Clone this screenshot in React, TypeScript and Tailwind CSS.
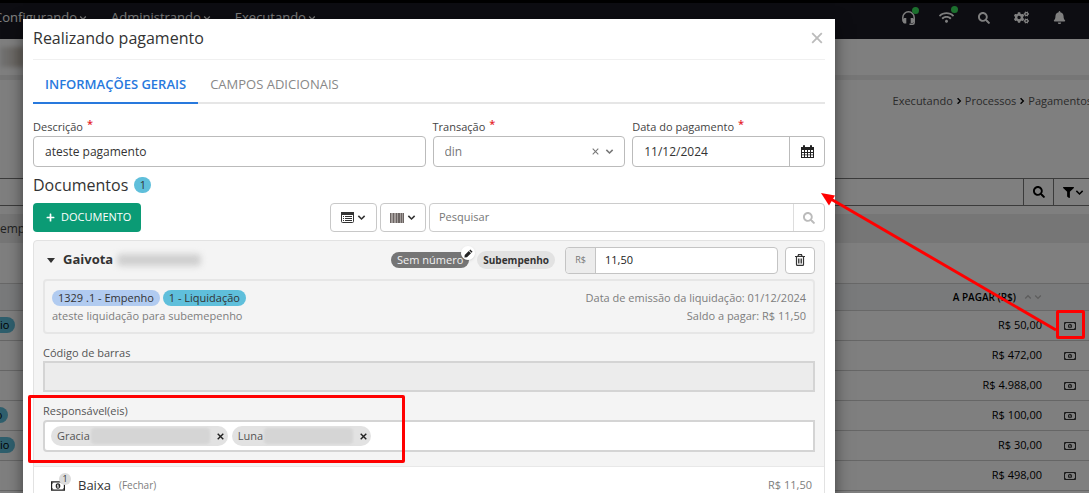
import React from "react";
import { FaBell, FaCogs, FaFilter, FaPlus, FaSearch, FaWifi } from "react-icons/fa";

function Chevron({ up = false, className = "" }: { up?: boolean; className?: string }) {
  return (
    <svg viewBox="0 0 10 10" className={className} fill="none" stroke="currentColor" strokeWidth="1.7" aria-hidden="true">
      <path d={up ? "M1.5 7 5 3.5 8.5 7" : "M1.5 3.2 5 6.7l3.5-3.5"} />
    </svg>
  );
}

function Cross({ className = "", stroke = 1.5 }: { className?: string; stroke?: number }) {
  return (
    <svg viewBox="0 0 10 10" className={className} fill="none" stroke="currentColor" strokeWidth={stroke} aria-hidden="true">
      <path d="m1 1 8 8M9 1 1 9" />
    </svg>
  );
}

function Headphones({ className = "" }: { className?: string }) {
  return (
    <svg viewBox="0 0 13 14" className={className} aria-hidden="true">
      <path fill="none" stroke="currentColor" strokeWidth="1.5" d="M1.200 10.500Q.8 8.500.8 6.500a5.700 5.700 0 0 1 11.400 0v5.200q0 1.500-1.700 1.500H7.500" />
      <path fill="currentColor" d="M2.300 7h2v5.500h-2Q1 12.500.8 10.500V8.500ZM10.700 7h-2v5h2l1.700-1.500v-2Z" />
    </svg>
  );
}

function Money({ className = "" }: { className?: string }) {
  return (
    <svg viewBox="0 0 12 8" className={className} aria-hidden="true">
      <path fill="none" stroke="currentColor" d="M.5.5h11v7H.5Z" />
      <path fill="currentColor" d="M1 1h1.200L1 2.200ZM11 1H9.800L11 2.200ZM1 7h1.200L1 5.800ZM11 7H9.800L11 5.800Z" />
      <path fill="currentColor" fillRule="evenodd" d="M6 1.700c1.300 0 2 1 2 2.300s-.7 2.300-2 2.300S4 5.300 4 4s.7-2.300 2-2.300ZM5.700 2.700l-.7.600.3.400.3-.2v1.200H5v.6h2v-.6h-.6v-2Z" />
    </svg>
  );
}

function Calendar({ className = "" }: { className?: string }) {
  return (
    <svg viewBox="0 0 13 13" className={className} aria-hidden="true">
      <path
        fill="currentColor"
        fillRule="evenodd"
        d="M0 2h2V.8Q2 0 3 0t1 .8V2h5V.8Q9 0 10 0t1 .8V2h2v11H0ZM1 5v2h2V5Zm3 0v2h2V5Zm3 0v2h2V5Zm3 0v2h2V5ZM1 8v1.500h2V8Zm3 0v1.500h2V8Zm3 0v1.500h2V8Zm3 0v1.500h2V8ZM1 10.300V12h2v-1.700Zm3 0V12h2v-1.700Zm3 0V12h2v-1.700Zm3 0V12h2v-1.700Z"
      />
    </svg>
  );
}

function ListBox({ className = "" }: { className?: string }) {
  return (
    <svg viewBox="0 0 13 11" className={className} aria-hidden="true">
      <rect x=".5" y=".5" width="12" height="10" rx="1" fill="none" stroke="currentColor" />
      <path fill="currentColor" d="M0 0h13v3H0ZM2 4h1v1H2Zm2 0h7v1H4ZM2 6h1v1H2Zm2 0h7v1H4ZM2 8h1v1H2Zm2 0h7v1H4Z" />
    </svg>
  );
}

function Barcode({ className = "" }: { className?: string }) {
  return (
    <svg viewBox="0 0 14 10" className={className} aria-hidden="true">
      <path fill="#a39d9b" d="M0 0h14v10H0Z" />
      <path fill="#6b6462" d="M0 0h1v10H0ZM3 0h1v10H3ZM6 0h1v10H6ZM8 0h2v10H8ZM11 0h1v10h-1ZM13 0h1v10h-1Z" />
    </svg>
  );
}

function Trash({ className = "" }: { className?: string }) {
  return (
    <svg viewBox="0 0 10 12" className={className} fill="none" stroke="currentColor" aria-hidden="true">
      <path strokeWidth="1.200" d="M0 2.500h10M3 2.300 3.500.7h3L7 2.300M1.500 2.500v8q0 .9.900.9h5.200q.9 0 .9-.9v-8" />
      <path strokeWidth=".9" d="M3.500 4.500v5M5 4.500v5M6.500 4.500v5" />
    </svg>
  );
}

const rows = [
  { value: "R$ 50,00", tag: "io", tagShift: "" },
  { value: "R$ 472,00" },
  { value: "R$ 4.988,00" },
  { value: "R$ 100,00", tag: "io", tagShift: "-ml-[7px]" },
  { value: "R$ 30,00", tag: "io", tagShift: "" },
  { value: "R$ 498,00" },
];

function NavLink({ children }: { children: string }) {
  return (
    <a href="#" className="flex items-center gap-0.5 text-[13px] text-white">
      {children}
      <Chevron className="size-2" />
    </a>
  );
}

function Page() {
  return (
    <div className="min-h-full bg-white">
      <header className="flex h-[39px] items-center justify-between border-t-[3px] border-black bg-[#1a1a24] pb-[7px] text-white">
        <nav className="-ml-1.5 flex items-center gap-6">
          <NavLink>Configurando</NavLink>
          <NavLink>Administrando</NavLink>
          <NavLink>Executando</NavLink>
        </nav>
        <div className="-mr-[13px] flex shrink-0 items-center gap-6">
          <button aria-label="Suporte" className="relative">
            <Headphones className="h-[14px] w-[13px]" />
            <span className="absolute -top-1 -right-1 size-[7px] rounded-full bg-[#38e05c]" />
          </button>
          <button aria-label="Conexão" className="relative">
            <FaWifi className="size-[15px]" />
            <span className="absolute -top-1 -right-1 size-[7px] rounded-full bg-[#38e05c]" />
          </button>
          <button aria-label="Buscar"><FaSearch className="size-3" /></button>
          <button aria-label="Configurações"><FaCogs className="size-[15px]" /></button>
          <button aria-label="Notificações"><FaBell className="size-[13px]" /></button>
          <span className="size-3 rounded-full bg-[#6fa8ee]" />
        </div>
      </header>

      <div className="flex h-[41px] items-center border-b-[5px] border-[#ececec]">
        <span className="h-5 w-6 bg-linear-to-r from-[#e6e6e6] to-[#c9c0b4] blur-[2px]" />
      </div>

      <nav className="-mr-[3px] flex h-[42px] items-center justify-end gap-0.5 text-[11px] text-[#555]">
        <a href="#">Executando</a>
        <Chevron className="size-2 -rotate-90 text-black" />
        <a href="#">Processos</a>
        <Chevron className="size-2 -rotate-90 text-black" />
        <a href="#">Pagamentos</a>
      </nav>

      <div className="mt-14 flex h-7 border-y border-[#777]">
        <input aria-label="Filtro" className="min-w-0 grow border-r border-[#777]" />
        <button aria-label="Pesquisar" className="flex w-[30px] items-center justify-center border-r border-[#777]">
          <FaSearch className="size-3" />
        </button>
        <button aria-label="Filtrar" className="flex w-[35px] items-center justify-center gap-px pl-1">
          <FaFilter className="size-[11px]" />
          <Chevron className="size-[9px]" />
        </button>
      </div>

      <div className="mt-2 flex h-[29px] items-center bg-[#ececec] text-xs text-[#444]">emp</div>

      <table className="mt-10 w-full border-collapse text-[11px] text-black">
        <thead>
          <tr className="h-[27px] border-y border-[#d0d0d0] bg-[#f2f4f6]">
            <th />
            <th className="text-right text-[10px] font-semibold">
              <span className="inline-flex items-center justify-end gap-0.5">
                <span className="mr-1.5">A PAGAR (R$)</span>
                <Chevron up className="size-2 text-[#bbb]" />
                <Chevron className="size-2 text-[#bbb]" />
              </span>
            </th>
            <th className="w-[47px]" />
          </tr>
        </thead>
        <tbody>
          {rows.map((row) => (
            <tr key={row.value} className="h-[30px] border-b border-[#ccc]">
              <td>
                {row.tag && (
                  <span className={`inline-block rounded-r-full bg-[#5fbfdb] pr-1.5 leading-4 ${row.tagShift}`}>{row.tag}</span>
                )}
              </td>
              <td className="text-right">{row.value}</td>
              <td className="w-[47px]">
                <button aria-label="Pagar" className="ml-[22px] block"><Money className="h-2 w-3 text-[#333]" /></button>
              </td>
            </tr>
          ))}
        </tbody>
      </table>
    </div>
  );
}

function FieldLabel({ id, children }: { id: string; children: string }) {
  return (
    <label htmlFor={id} className="flex h-[18px] items-center gap-1 text-[11px] font-medium text-[#444]">
      {children}
      <span className="-mt-1.5 font-semibold text-[#e5252a]">*</span>
    </label>
  );
}

function Person({ name, blurClass }: { name: string; blurClass: string }) {
  return (
    <span className="flex h-5 items-center rounded-full bg-[#e2e2e2] pr-1 pl-1.5 text-[#555]">
      {name}
      <span className={`mx-px h-4 rounded-sm bg-[#d5d5d5] blur-[1px] ${blurClass}`} />
      <button aria-label={`Remover ${name}`} className="ml-1.5 text-[#222]"><Cross className="size-[7px]" stroke={2} /></button>
    </span>
  );
}

function DocumentCard() {
  return (
    <section className="mt-2 rounded-t border border-[#e2e2e2] bg-[#f4f4f4] text-[11px]">
      <div className="px-[9px] pt-[5px]">
        <div className="flex h-7 items-center">
          <button className="flex items-center gap-2 pl-1 text-[13px] font-bold text-[#333]">
            <svg viewBox="0 0 8 5" className="h-[5px] w-2" aria-hidden="true"><path fill="currentColor" d="M0 0h8L4 5Z" /></svg>
            Gaivota
          </button>
          <span className="ml-1 h-3 w-[84px] rounded bg-[#cfcfcf] blur-[3px]" />
          <span className="relative ml-auto rounded-full bg-[#757575] px-1.5 leading-4 text-[#f2f2f2]">
            Sem número
            <button aria-label="Editar número" className="absolute -top-1.5 -right-1.5 flex size-[14px] items-center justify-center rounded-full bg-white text-[#222] shadow">
              <svg viewBox="0 0 10 10" className="size-[9px]" aria-hidden="true">
                <path fill="currentColor" d="M7 .5 9.500 3 8.400 4.100 5.900 1.600ZM5.300 2.200l2.500 2.500-4.500 4.500L.5 9.500l.3-2.800Z" />
              </svg>
            </button>
          </span>
          <span className="mr-2.5 ml-2 rounded-full bg-[#e2e2e2] px-1.5 text-[10px] leading-[18px] font-bold text-[#333]">Subempenho</span>
          <div className="flex h-[27px] w-[213px] rounded border border-[#c4c4c4] bg-white">
            <span className="flex w-[30px] items-center justify-center rounded-l border-r border-[#c4c4c4] bg-[#ececec] text-[9px] text-[#777]">R$</span>
            <input aria-label="Valor" defaultValue="11,50" className="w-0 grow px-[9px] text-[#222] outline-none" />
          </div>
          <button aria-label="Excluir" className="ml-[7px] flex h-[27px] w-[30px] items-center justify-center rounded border border-[#c4c4c4] bg-white text-[#333]">
            <Trash className="h-3 w-2.5" />
          </button>
        </div>

        <div className="mt-[5px] flex h-[55px] justify-between rounded border-2 border-[#e6e6e6] px-[7px] pt-[9px] text-[#7d7d7d]">
          <div>
            <div className="flex gap-[3px] text-[#333]">
              <span className="rounded-full bg-[#b1cbf0] px-1.5 leading-4">1329 .1 - Empenho</span>
              <span className="rounded-full bg-[#5fbfdb] px-1.5 leading-4">1 - Liquidação</span>
            </div>
            <p className="mt-0.5 leading-4">ateste liquidação para subemepenho</p>
          </div>
          <div className="text-right">
            <p className="leading-4">Data de emissão da liquidação: 01/12/2024</p>
            <p className="mt-0.5 leading-4">Saldo a pagar: R$ 11,50</p>
          </div>
        </div>

        <label htmlFor="barcode" className="mt-2.5 block leading-[17px] font-medium text-[#555]">Código de barras</label>
        <input id="barcode" readOnly className="block h-[31px] w-full border-2 border-[#d4d4d4] bg-[#ececec] px-2" />

        <label htmlFor="people" className="mt-2.5 block leading-[18px] font-medium text-[#555]">Responsável(eis)</label>
        <div className="flex h-8 items-center gap-1 rounded-l-sm border-2 border-[#d4d4d4] bg-white px-1.5">
          <Person name="Gracia" blurClass="w-[119px]" />
          <Person name="Luna" blurClass="w-[89px]" />
          <input id="people" className="w-0 grow outline-none" />
        </div>
      </div>

      <div className="mt-3.5 flex h-[38px] items-center border-t border-[#e8e8e8] bg-white pr-3 pl-[17px] text-[#7d7d7d]">
        <span className="relative text-[#222]">
          <Money className="h-2.5 w-3.5" />
          <span className="absolute -top-2 -right-1.5 flex size-3 items-center justify-center rounded-full bg-[#dcdcdc] text-[9px] text-[#333]">1</span>
        </span>
        <span className="ml-[13px] text-[13px] text-[#333]">Baixa</span>
        <button className="ml-2 text-[10px]">(Fechar)</button>
        <span className="ml-auto">R$ 11,50</span>
      </div>
    </section>
  );
}

function PaymentDialog() {
  return (
    <div role="dialog" aria-label="Realizando pagamento" className="min-h-full bg-white px-2.5 text-[#333] shadow-[0_5px_15px_rgba(0,0,0,0.5)]">
      <div className="flex h-[41px] items-center justify-between border-b border-[#f0f0f0] pr-0.5 pb-0.5">
        <h2 className="text-base">Realizando pagamento</h2>
        <button aria-label="Fechar" className="text-[#bbb]"><Cross className="size-3" /></button>
      </div>

      <div className="mt-2 flex h-9 border-b-2 border-[#e6e6e6] text-[13px]">
        <button className="-mb-0.5 border-b-2 border-[#2879dd] px-3 font-semibold text-[#2879dd]">INFORMAÇÕES GERAIS</button>
        <button className="px-3 text-[#888]">CAMPOS ADICIONAIS</button>
      </div>

      <div className="mt-3.5 grid grid-cols-4 gap-[7px] text-xs">
        <div className="col-span-2">
          <FieldLabel id="description">Descrição</FieldLabel>
          <input id="description" defaultValue="ateste pagamento" className="h-[31px] w-full rounded border border-[#bbb] px-[11px]" />
        </div>
        <div>
          <FieldLabel id="transaction">Transação</FieldLabel>
          <div className="flex h-[31px] items-center rounded border border-[#bbb] pr-2.5 text-[#777]">
            <select id="transaction" className="w-0 grow appearance-none pl-[11px] outline-none">
              <option>din</option>
            </select>
            <button aria-label="Limpar" className="mr-1.5"><Cross className="size-[7px]" /></button>
            <Chevron className="size-[9px]" />
          </div>
        </div>
        <div>
          <FieldLabel id="date">Data do pagamento</FieldLabel>
          <div className="flex h-[31px] rounded border border-[#bbb]">
            <input id="date" defaultValue="11/12/2024" className="w-0 grow px-[11px] outline-none" />
            <button aria-label="Abrir calendário" className="flex w-[35px] items-center justify-center border-l border-[#bbb] text-[#222]">
              <Calendar className="size-[13px]" />
            </button>
          </div>
        </div>
      </div>

      <h3 className="mt-1.5 flex h-6 items-center gap-1.5 text-base">
        Documentos
        <span className="flex h-4 w-[17px] items-center justify-center rounded-full bg-[#5fbfdb] text-[11px]">1</span>
      </h3>

      <div className="mt-1.5 flex h-[29px] items-stretch text-[11px]">
        <button className="flex items-center gap-1.5 rounded bg-[#0b9b75] pr-2.5 pl-[13px] text-white">
          <FaPlus className="size-[9px]" />
          DOCUMENTO
        </button>
        <button aria-label="Exibição" className="ml-auto flex w-[47px] items-center justify-center gap-[3px] rounded border border-[#c8c8c8]">
          <ListBox className="h-[11px] w-[13px]" />
          <Chevron className="size-[9px]" />
        </button>
        <button aria-label="Código de barras" className="ml-[3px] flex w-[46px] items-center justify-center gap-[3px] rounded border border-[#c8c8c8]">
          <Barcode className="h-2.5 w-3.5" />
          <Chevron className="size-[9px]" />
        </button>
        <div className="ml-[3px] flex w-1/2 rounded border border-[#ccc]">
          <input aria-label="Pesquisar documentos" placeholder="Pesquisar" className="w-0 grow px-[9px] outline-none placeholder:text-[#777]" />
          <button aria-label="Pesquisar" className="flex w-[31px] items-center justify-center border-l border-[#ddd] text-[#bbb]">
            <FaSearch className="size-3" />
          </button>
        </div>
      </div>

      <DocumentCard />
    </div>
  );
}

export default function App() {
  return (
    <div className="relative h-screen overflow-hidden font-['Open_Sans',sans-serif]">
      <Page />
      <div className="absolute inset-0 bg-black/50 pt-[19px] pr-[254px] pl-[23px]">
        <PaymentDialog />
      </div>
      <div className="pointer-events-none absolute top-[395px] left-[28px] h-[68px] w-[377px] rounded-xs border-3 border-[#f00]" />
      <div className="pointer-events-none absolute top-[310px] right-[4px] h-[29px] w-[29px] rounded-xs border-3 border-[#f00]" />
      <svg viewBox="0 0 240 140" className="pointer-events-none absolute top-[192px] right-[31px] h-[140px] w-[240px]" aria-hidden="true">
        <path d="M12 6.500 238 138" stroke="#f00" strokeWidth="3" />
        <path d="M3 1 17 3.500 11 13.500Z" fill="#f00" />
      </svg>
    </div>
  );
}
